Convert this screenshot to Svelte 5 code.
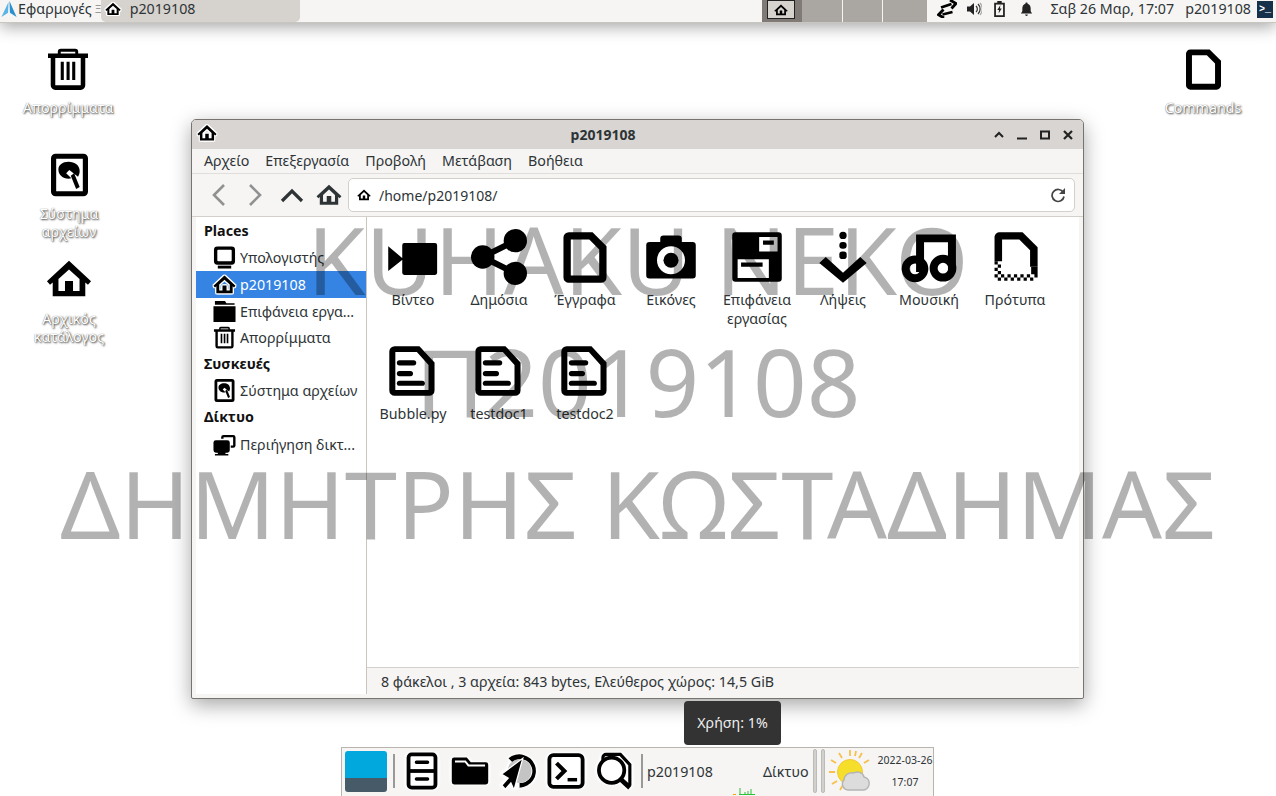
<script>
  const places = [
    { head: 'Places' },
    { icon: 'computer', label: 'Υπολογιστής' },
    { icon: 'home', label: 'p2019108', active: true },
    { icon: 'folder', label: 'Επιφάνεια εργα...' },
    { icon: 'trash', label: 'Απορρίμματα' },
    { head: 'Συσκευές' },
    { icon: 'disk', label: 'Σύστημα αρχείων' },
    { head: 'Δίκτυο' },
    { icon: 'network', label: 'Περιήγηση δικτ...' }
  ];
  const files = [
    { icon: 'video', label: 'Βίντεο' },
    { icon: 'share', label: 'Δημόσια' },
    { icon: 'doc', label: 'Έγγραφα' },
    { icon: 'camera', label: 'Εικόνες' },
    { icon: 'desktop', label: 'Επιφάνεια εργασίας' },
    { icon: 'download', label: 'Λήψεις' },
    { icon: 'music', label: 'Μουσική' },
    { icon: 'template', label: 'Πρότυπα' },
    { icon: 'text', label: 'Bubble.py' },
    { icon: 'text', label: 'testdoc1' },
    { icon: 'text', label: 'testdoc2' }
  ];
  const menus = ['Αρχείο', 'Επεξεργασία', 'Προβολή', 'Μετάβαση', 'Βοήθεια'];
</script>

<svg class="defs" aria-hidden="true">
  <symbol id="home" viewBox="0 0 24 24">
    <path fill-rule="evenodd" d="M12 2.500 23.500 13.200l-1.600 1.800-1.400-1.200V21H3.500v-7.200L2.100 15 .5 13.200zM12 7l-5.500 5v6.200h3.400V13h4.200v5.200h3.400V12z"/>
  </symbol>
  <symbol id="trash" viewBox="1 0 22 24">
    <path fill-rule="evenodd" d="M8 .8h8a1.600 1.600 0 0 1 1.600 1.600V3.500H23v2.400h-1.500V21a2.500 2.500 0 0 1-2.500 2.500H5A2.500 2.500 0 0 1 2.500 21V5.900H1V3.500h5.400V2.400A1.600 1.600 0 0 1 8 .8zm0 1.700v1h8v-1zM5 5.900V21h14V5.900z"/>
    <path d="M8 8h1.700v10H8zM11.200 8h1.700v10h-1.700zM14.300 8H16v10h-1.700z"/>
  </symbol>
  <symbol id="file" viewBox="2 .5 20 23">
    <path fill-rule="evenodd" d="M4.500 .5h11L22 7v14a2.500 2.500 0 0 1-2.500 2.500h-15A2.500 2.500 0 0 1 2 21V3A2.500 2.500 0 0 1 4.500.5zM5.400 3.800v16.400h13.200V8.500l-4.700-4.700z"/>
  </symbol>
  <symbol id="disk" viewBox="2 .5 20 23">
    <path fill-rule="evenodd" d="M4.500 .5h15A2.500 2.500 0 0 1 22 3v18a2.500 2.500 0 0 1-2.500 2.500h-15A2.500 2.500 0 0 1 2 21V3A2.500 2.500 0 0 1 4.500.5zM4.800 3.200v17.600h14.400V3.200z"/>
    <path d="M11.500 4.800c3.400 0 6 1.900 6 5.100 0 1.100-.3 2.100-.9 3l-4.700-3.600-1.700 1.700 2.800 2.800c-.5.100-1 .2-1.500.2-3.200 0-5.500-2.200-5.500-5 0-2.500 2.300-4.200 5.500-4.200zM12.700 12.400l1.800-1.400 3 7.500-1.900 1z"/>
  </symbol>
  <symbol id="computer" viewBox="0 0 24 24">
    <path fill-rule="evenodd" d="M4.500 .5h15A3.500 3.500 0 0 1 23 4v12a3.500 3.500 0 0 1-3.500 3.500h-15A3.500 3.500 0 0 1 1 16V4A3.500 3.500 0 0 1 4.500.5zM5.500 3.800a1 1 0 0 0-1 1v10a1 1 0 0 0 1 1h13a1 1 0 0 0 1-1v-10a1 1 0 0 0-1-1z"/>
    <path d="M5 20.500h14v3H5z"/>
  </symbol>
  <symbol id="folder" viewBox="0 0 24 24">
    <path d="M2 1h10.500L14 3.500h8.500V5H2zM.5 6.500h23V23H.5z"/>
  </symbol>
  <symbol id="network" viewBox="0 0 24 24">
    <path fill-rule="evenodd" d="M11 2h10a2.500 2.500 0 0 1 2.500 2.500V13a2.500 2.500 0 0 1-2.500 2.500h-2.500V13H21V4.500H11V6H8.500V4.500A2.500 2.500 0 0 1 11 2z"/>
    <path d="M3 7.500h12A2.500 2.500 0 0 1 17.500 10v8a2.500 2.500 0 0 1-2.500 2.500h-2V22h3v1.500H2V22h3v-1.500H3A2.500 2.500 0 0 1 .5 18v-8A2.500 2.500 0 0 1 3 7.500z"/>
  </symbol>
  <symbol id="video" viewBox="-1 -1 26 26">
    <path d="M8 5.500h14.200a1 1 0 0 1 1 1v12.800a1 1 0 0 1-1 1H8a1 1 0 0 1-1-1V6.500a1 1 0 0 1 1-1zM.5 7 7.500 12.900.5 18.500z"/>
  </symbol>
  <symbol id="share" viewBox="0 0 24 24">
    <circle cx="19" cy="5" r="5"/><circle cx="19" cy="19" r="5"/><circle cx="5" cy="12" r="5"/>
    <path d="M5 12 19 5M5 12l14 7" stroke="#000" stroke-width="2.600" fill="none"/>
  </symbol>
  <symbol id="doc" viewBox="-1 -1 26 26">
    <path fill-rule="evenodd" d="M4.500 .5h11L22 7v14.500a2.500 2.500 0 0 1-2.500 2.500h-15A2.500 2.500 0 0 1 2 21.500V3A2.500 2.500 0 0 1 4.500.5zM5.400 3.900v16.700h13.200V8.500l-4.600-4.600z"/>
  </symbol>
  <symbol id="camera" viewBox="-1 -1 26 26">
    <path fill-rule="evenodd" d="M8.500 2h7a1.500 1.500 0 0 1 1.500 1.500V5h5a1.500 1.500 0 0 1 1.500 1.500v14a1.500 1.500 0 0 1-1.500 1.500H2a1.500 1.500 0 0 1-1.500-1.500v-14A1.500 1.500 0 0 1 2 5h5V3.500A1.500 1.500 0 0 1 8.500 2zM12 7a6.500 6.500 0 1 0 0 13 6.500 6.500 0 0 0 0-13z"/>
    <circle cx="12" cy="13.500" r="3.500"/>
  </symbol>
  <symbol id="desktop" viewBox="-1 -1 26 26">
    <path fill-rule="evenodd" d="M2 .5h20A1.500 1.500 0 0 1 23.500 2v20a1.500 1.500 0 0 1-1.500 1.500H2A1.500 1.500 0 0 1 .5 22V2A1.500 1.500 0 0 1 2 .5zM13 2.700v6.800h8.500V2.700zm1.800 1.600h5v2h-5zM3 13v8.700h14.500V13zm1.600 1.500h10v2h-10z"/>
  </symbol>
  <symbol id="download" viewBox="-1 -1 26 26">
    <circle cx="12" cy="2" r="1.700"/><rect x="10.300" y="5" width="3.400" height="3.200" rx="1.500"/><rect x="10.300" y="9.500" width="3.400" height="3.400" rx="1.300"/>
    <path d="M1 14.800 4 12l8 7.300L20 12l3 2.800L12 24z"/>
  </symbol>
  <symbol id="music" viewBox="-1 -1 26 26">
    <path d="M6 1.500h18.500v17h-3.700V5.200H9.700V19H6z"/>
    <path fill-rule="evenodd" d="M5.500 11.300a6.200 6.200 0 1 1 0 12.400 6.200 6.200 0 0 1 0-12.400zm0 3.700a2.500 2.500 0 1 0 0 5 2.500 2.500 0 0 0 0-5zM18.500 11a6.200 6.200 0 1 1 0 12.400 6.200 6.200 0 0 1 0-12.400zm0 3.700a2.500 2.500 0 1 0 0 5 2.500 2.500 0 0 0 0-5z"/>
  </symbol>
  <symbol id="template" viewBox="-1 -1 26 26">
    <path d="M4.500.5h11L22.500 7.500V16.500H19V8.900L14 3.900H6V14H2.500V2.500A2.500 2.500 0 0 1 4.500.5z"/>
    <path d="M2.500 14h1.500v1.500H2.500zM4 15.500h1.500V17H4zM2.500 17H4v1.500H2.500zM4 18.500h1.500V20H4zM2.500 20H4v1.500H2.500zM5.500 20H7v1.500H5.500zM4 21.500h1.500V23H4zM7 21.500h1.500V23H7zM10 21.500h1.500V23H10zM8.500 20H10v1.500H8.500zM11.500 20H13v1.500h-1.500zM13 21.500h1.500V23H13zM14.500 20H16v1.500h-1.500zM16 21.500h1.500V23H16zM17.500 20H19v1.500h-1.500zM19 21.500h1.500V23H19zM19.500 16.500h3V20h-3zM21 20h1.500v1.500H21z"/>
  </symbol>
  <symbol id="text" viewBox="-1 -1 26 26">
    <path fill-rule="evenodd" d="M3.500.5h11.500l7 7.500v13a2.500 2.500 0 0 1-2.500 2.500h-16A2.500 2.500 0 0 1 1 21V3A2.500 2.500 0 0 1 3.500.5zM3.800 3.200v17.600h15.400V9.200l-5.400-6z"/>
    <rect x="4.500" y="7" width="9" height="2.400" rx="1.200"/><rect x="4.500" y="12" width="7.500" height="2.400" rx="1.200"/><rect x="4.500" y="16.500" width="13" height="2.400" rx="1.200"/>
  </symbol>
</svg>

<div class="desktop">
  <header class="panel">
    <div class="panel-left">
      <svg class="logo" viewBox="0 0 16 18"><path d="M8.500 0 16 17 9 12.500z" fill="#2a8fd0"/><path d="M7.500 1 0 17l7-4.500z" fill="#5ab4e6"/></svg>
      <span class="apps">Εφαρμογές</span>
      <span class="handle">Ξ</span>
      <div class="task">
        <svg class="i14 halo"><use href="#home" /></svg>
        <span>p2019108</span>
      </div>
    </div>
    <div class="panel-right">
      <div class="pager">
        <div class="page current"><span class="page-win"><svg class="i12"><use href="#home" /></svg></span></div>
        <div class="page p2"></div>
        <div class="page"></div>
        <div class="page last"></div>
      </div>
      <div class="tray">
        <svg class="arrows" viewBox="0 0 20 18"><path d="M4 7.500 14.500 4M15.500 12 5.500 14.500" fill="none" stroke="#000" stroke-width="2.800"/><path d="M13 0 19 3.500 14.500 8.500M6.500 9.500 1.500 14.800 7 18" fill="none" stroke="#000" stroke-width="2.800"/></svg>
        <svg class="vol" viewBox="0 0 16 16"><path d="M1 5.500h3L8 2v12L4 10.500H1z" fill="#222"/><path d="M10 5a4 4 0 0 1 0 6M12 3a7 7 0 0 1 0 10" fill="none" stroke="#333" stroke-width="1.200"/><path d="M14 2a9 9 0 0 1 0 12" fill="none" stroke="#aaa" stroke-width="1.200"/></svg>
        <svg class="batt" viewBox="0 0 14 18"><path d="M4.500 0h5v2H13v16H1V2h3.500z" fill="#222"/><rect x="3" y="4" width="8" height="12" fill="#f6f5f4"/><path d="M8 4.500 4.500 10h2L6 14l3.500-5.500h-2z" fill="#222"/></svg>
        <svg class="bell" viewBox="0 0 14 16"><path d="M7 .5c.8 0 1.200.5 1.200 1.200C10.500 2.400 11.500 4.300 11.500 7v3l1.500 2.200H1L2.500 10V7c0-2.700 1-4.600 3.300-5.300C5.800 1 6.200.5 7 .5zM5.500 13.500h3a1.500 1.500 0 0 1-3 0z" fill="#222"/></svg>
      </div>
      <span class="clock">Σαβ 26 Μαρ, 17:07</span>
      <span class="user">p2019108</span>
      <span class="term-mini">&gt;_</span>
    </div>
  </header>

  <div class="dicon d-trash"><svg><use href="#trash" /></svg><span>Απορρίμματα</span></div>
  <div class="dicon d-disk"><svg><use href="#disk" /></svg><span>Σύστημα<br />αρχείων</span></div>
  <div class="dicon d-home"><svg><use href="#home" /></svg><span>Αρχικός<br />κατάλογος</span></div>
  <div class="dicon d-cmd"><svg><use href="#file" /></svg><span>Commands</span></div>

  <section class="window">
    <div class="titlebar">
      <svg class="i20 ticon halo"><use href="#home" /></svg>
      <span class="title">p2019108</span>
      <div class="wbtns">
        <svg viewBox="0 0 10 10"><path d="M1 7l4-4 4 4" fill="none" stroke="#222" stroke-width="2"/></svg>
        <svg viewBox="0 0 10 10"><path d="M0 8.500h10" stroke="#222" stroke-width="2"/></svg>
        <svg viewBox="0 0 10 10"><rect x="1" y="1.500" width="8" height="7" fill="none" stroke="#222" stroke-width="2"/></svg>
        <svg viewBox="0 0 10 10"><path d="M1 1l8 8M9 1l-8 8" stroke="#222" stroke-width="2.200"/></svg>
      </div>
    </div>
    <nav class="menubar">
      {#each menus as m}<span>{m}</span>{/each}
    </nav>
    <div class="toolbar">
      <svg class="nav" viewBox="0 0 24 24"><path d="M16 2 6 12l10 10" fill="none" stroke="#919191" stroke-width="2.600"/></svg>
      <svg class="nav fwd" viewBox="0 0 24 24"><path d="M8 2l10 10L8 22" fill="none" stroke="#919191" stroke-width="2.600"/></svg>
      <svg class="nav" viewBox="0 0 24 24"><path d="M2 18 12 8l10 10" fill="none" stroke="#2e3436" stroke-width="3.200"/></svg>
      <svg class="navhome"><use href="#home" /></svg>
      <div class="location">
        <svg class="i12"><use href="#home" /></svg>
        <span class="path">/home/p2019108/</span>
        <svg class="reload" viewBox="0 0 16 16"><path d="M13.300 5.500A6 6 0 1 0 14 9.500" fill="none" stroke="#444" stroke-width="1.700"/><path d="M15 1v6H9z" fill="#444"/></svg>
      </div>
    </div>
    <div class="body">
      <aside class="sidebar">
        {#each places as p}
          {#if p.head}
            <div class="shead">{p.head}</div>
          {:else}
            <div class="sitem" class:active={p.active}>
              <svg class:halo={p.active}><use href={'#' + p.icon} /></svg>
              <span>{p.label}</span>
            </div>
          {/if}
        {/each}
      </aside>
      <div class="content">
        <main class="files">
          {#each files as f}
            <div class="file">
              <svg><use href={'#' + f.icon} /></svg>
              <span>{f.label}</span>
            </div>
          {/each}
        </main>
        <footer class="status">8 φάκελοι , 3 αρχεία: 843 bytes, Ελεύθερος χώρος: 14,5 GiB</footer>
      </div>
    </div>
  </section>

  <div class="watermark">
    <div>KUHAKU NEKO</div>
    <div>Π2019108</div>
    <div>ΔΗΜΗΤΡΗΣ ΚΩΣΤΑΔΗΜΑΣ</div>
  </div>

  <div class="tooltip">Χρήση: 1%</div>

  <footer class="dock">
    <div class="showapps"></div>
    <div class="sep"></div>
    <div class="launchers">
      <svg viewBox="0 0 24 24"><rect x="3.500" y="1.500" width="17" height="21" rx="2" fill="#fff" stroke="#000" stroke-width="2.400"/><path d="M3.500 12h17" stroke="#000" stroke-width="2.400"/><path d="M8.500 6.500h7M8.500 17h7" stroke="#000" stroke-width="2.200" stroke-linecap="round"/></svg>
      <svg viewBox="0 0 24 24"><path d="M.5 5a1.500 1.500 0 0 1 1.500-1.500h8l2.500 3H22a1.500 1.500 0 0 1 1.500 1.500v11A1.500 1.500 0 0 1 22 20.500H2A1.500 1.500 0 0 1 .5 19z"/><path d="M2.500 6h6.500l2 2.500h10.500" stroke="#fff" stroke-width="1.200" fill="none"/></svg>
      <svg viewBox="0 0 24 24"><path d="M6 4a10.500 10.500 0 1 1 7 18.500v-3a7.500 7.500 0 1 0-4.500-13z"/><circle cx="13" cy="12" r="7.500" fill="#c4c4c4"/><path d="M15 4 9.500 24l-2-4.500-3.500 4L1.800 21l4-4.500L1.500 14z" stroke="#fff" stroke-width=".8"/></svg>
      <svg viewBox="0 0 24 24"><rect x="1.500" y="2" width="21" height="20" rx="2.500" fill="#fff" stroke="#000" stroke-width="2.400"/><path d="M6 7l5 5-5 5" fill="none" stroke="#000" stroke-width="2.600"/><path d="M13 17.500h6" stroke="#000" stroke-width="2.200"/></svg>
      <svg viewBox="0 0 24 24"><path d="M5 9V3.500A2 2 0 0 1 7 1.500h9l6 6.500v13" fill="#fff" stroke="#000" stroke-width="2"/><circle cx="10.500" cy="11.500" r="8" fill="#fff" stroke="#000" stroke-width="2.400"/><path d="M16 17l6 5.500" stroke="#000" stroke-width="3"/></svg>
    </div>
    <div class="sep sep2"></div>
    <span class="dock-user">p2019108</span>
    <span class="dock-net">Δίκτυο<svg class="spark" viewBox="0 0 22 8"><path d="M0 7.500h3" stroke="#f4a400"/><path d="M6 7.500h16M7 7.500V1M12 7.500V5M15 7.500V4M18 7.500V2" stroke="#2fbf3a" fill="none"/></svg></span>
    <div class="grips"><i></i><i></i></div>
    <svg class="weather" viewBox="0 0 42 42">
      <g stroke="#f7c04a" stroke-width="1.800"><path d="M21 0v6M10 3l3 5M2 10l5 3M0 22h6M3 34l5-3M11 40l3-5M33 3l-3 5M40 10l-5 3M27 1l-1 5"/></g>
      <circle cx="21" cy="22" r="12.500" fill="#f6df2a" stroke="#f3c733" stroke-width="1"/>
      <path d="M19 40a6 6 0 0 1-4-10c0-5 5-8 10-7 3-2 9-1 10 4 4 1 6 4 5 8-1 3-3 5-6 5z" fill="#dcdcdc" stroke="#b4b4b4" stroke-width="1.400"/>
    </svg>
    <div class="dock-clock"><span>2022-03-26</span><span>17:07</span></div>
  </footer>
</div>

<style>
  :global(body) {
    margin: 0;
    background: #fff;
    overflow: hidden;
  }
  .defs {
    position: absolute;
    width: 0;
    height: 0;
  }
  .desktop {
    position: relative;
    width: 1276px;
    height: 796px;
    overflow: hidden;
    background: #fff;
    font-family: "Noto Sans", sans-serif;
    font-size: 14.25px;
    color: #2e3436;
  }
  svg { display: block; flex: none; }
  .panel {
    position: relative;
    z-index: 3;
    height: 22px;
    display: flex;
    justify-content: space-between;
    background: #f6f5f4;
    border-bottom: 1px solid #c9c5bf;
    box-shadow: 0 4px 16px rgba(0, 0, 0, 0.35);
  }
  .panel-left, .panel-right { display: flex; align-items: flex-start; height: 22px; line-height: 18px; }
  .logo { width: 16px; height: 17px; margin: 1px 0 0 1px; }
  .apps { margin-left: 1px; }
  .handle { margin-left: 3px; font-size: 11px; color: #999; width: 6px; }
  .task {
    display: flex;
    align-items: flex-start;
    width: 199px;
    height: 22px;
    box-sizing: border-box;
    padding: 0 0 0 4px;
    background: #d6d2ce;
    border-radius: 0 0 5px 5px;
    gap: 9px;
  }
  .i14 { width: 16px; height: 16px; margin-top: 1px; }
  .i12 { width: 14px; height: 14px; }
  .i20 { width: 20px; height: 20px; }
  .pager { display: flex; height: 22px; margin-right: 10px; width: 165px; }
  .page { width: 40px; background: #aaa7a3; border-right: 1px solid #f6f5f4; box-sizing: border-box; }
  .page.p2 { width: 41px; }
  .page.last { border-right: 0; width: 44px; }
  .page.current {
    background: #7f7a75;
    display: flex;
    justify-content: center;
    border-right: 0;
    width: 40px;
  }
  .page-win {
    width: 28px;
    height: 19px;
    border: 1px solid #222;
    background: #d6d2ce;
    display: flex;
    align-items: center;
    justify-content: center;
    box-sizing: border-box;
    margin-right: 3px;
  }
  .tray { display: flex; align-items: center; height: 18px; }
  .arrows { width: 20px; height: 18px; margin-right: 9px; }
  .vol { width: 16px; height: 16px; margin-right: 11px; }
  .batt { width: 13px; height: 16px; margin-right: 14px; }
  .bell { width: 13px; height: 15px; margin-right: 17px; }
  .user { margin-left: 11px; }
  .term-mini {
    width: 16px;
    height: 17px;
    margin: 1px 3px 0 6px;
    background: #16324a;
    color: #fff;
    font: bold 10px/17px "Liberation Mono", monospace;
    text-align: center;
  }
  .dicon {
    position: absolute;
    width: 110px;
    display: flex;
    flex-direction: column;
    align-items: center;
    color: #fff;
    text-align: center;
    line-height: 18px;
    text-shadow: 1px 1px 2px rgba(0, 0, 0, 0.75), 0 0 1px rgba(0, 0, 0, 0.5);
  }
  .dicon svg { height: 44px; margin-bottom: 8px; }
  .d-trash { left: 13px; top: 47px; }
  .d-trash svg { width: 40px; }
  .d-disk { left: 14px; top: 153px; }
  .d-disk svg { width: 37px; }
  .d-home { left: 14px; top: 256px; }
  .d-home svg { width: 46px; height: 46px; margin-bottom: 8px; }
  .d-cmd { left: 1148px; top: 49px; }
  .d-cmd svg { width: 35px; height: 41px; margin-bottom: 9px; }
  .window {
    position: absolute;
    left: 191px;
    top: 119px;
    width: 893px;
    height: 580px;
    box-sizing: border-box;
    display: flex;
    flex-direction: column;
    background: #f6f5f4;
    border: 1px solid #77736e;
    border-radius: 5px 5px 2px 2px;
    box-shadow: 0 6px 20px rgba(0, 0, 0, 0.35);
  }
  .titlebar {
    height: 29px;
    flex: none;
    display: flex;
    align-items: center;
    position: relative;
    background: #d8d5d2;
    border-radius: 4px 4px 0 0;
    padding-left: 5px;
  }
  .ticon { margin-top: -3px; }
  .title {
    position: absolute;
    left: 0;
    width: 822px;
    text-align: center;
    font-weight: 700;
    font-size: 14px;
    color: #2e3436;
  }
  .wbtns { position: absolute; right: 10px; top: 10px; display: flex; gap: 13px; }
  .wbtns svg { width: 10px; height: 10px; }
  .menubar {
    height: 25px;
    flex: none;
    display: flex;
    align-items: center;
    gap: 16px;
    padding: 0 0 2px 12px;
    border-bottom: 1px solid #e0dedb;
    box-sizing: border-box;
  }
  .toolbar {
    height: 43px;
    flex: none;
    box-sizing: border-box;
    display: flex;
    align-items: center;
    padding: 0 8px 0 16px;
    border-bottom: 1px solid #d3cfca;
  }
  .nav { width: 24px; height: 24px; margin-right: 12px; }
  .fwd { margin-left: -2px; margin-right: 14px; }
  .navhome { width: 26px; height: 26px; fill: #2e3436; }
  .location {
    flex: 1;
    height: 34px;
    margin-left: 6px;
    box-sizing: border-box;
    display: flex;
    align-items: center;
    background: #fff;
    border: 1px solid #d3cfca;
    border-radius: 5px;
    padding: 0 8px;
    gap: 8px;
  }
  .path { flex: 1; font-size: 14px; }
  .reload { width: 16px; height: 16px; }
  .body { flex: 1; display: flex; min-height: 0; margin: 0 4px 4px; background: #fff; }
  .sidebar {
    width: 171px;
    flex: none;
    box-sizing: border-box;
    padding-top: 1px;
    background: #fff;
    border-right: 1px solid #c9c5bf;
  }
  .shead { height: 26.6px; line-height: 26.6px; padding-left: 8px; font-weight: 700; color: #111; }
  .sitem {
    height: 26.6px;
    display: flex;
    align-items: center;
    gap: 4px;
    padding-left: 17px;
    color: #2e3436;
    white-space: nowrap;
  }
  .sitem svg { width: 23px; height: 23px; }
  .sitem.active { background: #3584e4; color: #fff; }
  .halo { filter: drop-shadow(1px 0 0 #fff) drop-shadow(-1px 0 0 #fff) drop-shadow(0 1px 0 #fff) drop-shadow(0 -1px 0 #fff); }
  .content { flex: 1; min-width: 0; display: flex; flex-direction: column; }
  .files {
    flex: 1;
    display: grid;
    grid-template-columns: repeat(auto-fill, 86px);
    grid-auto-rows: 114px;
    padding: 12px 0 0 3px;
    align-content: start;
  }
  .file { display: flex; flex-direction: column; align-items: center; text-align: center; line-height: 19px; }
  .file svg { width: 56px; height: 56px; }
  .file span { margin-top: 5px; width: 84px; }
  .status {
    height: 27px;
    flex: none;
    box-sizing: border-box;
    display: flex;
    align-items: center;
    padding-left: 14px;
    background: #f6f5f4;
    border-top: 1px solid #d3cfca;
  }
  .watermark {
    position: absolute;
    left: 0;
    right: 0;
    top: 198px;
    z-index: 4;
    pointer-events: none;
    display: flex;
    flex-direction: column;
    align-items: center;
    font-size: 94px;
    line-height: 122px;
    color: rgba(0, 0, 0, 0.3);
    white-space: nowrap;
  }
  .tooltip {
    position: absolute;
    left: 684px;
    top: 701px;
    width: 97px;
    height: 44px;
    z-index: 5;
    line-height: 44px;
    text-align: center;
    background: #333;
    color: #eee;
    border-radius: 4px;
  }
  .dock {
    position: absolute;
    left: 341px;
    top: 747px;
    width: 593px;
    height: 49px;
    box-sizing: border-box;
    display: flex;
    align-items: center;
    background: #f6f5f4;
    border: 1px solid #b9b4ad;
    border-bottom: 0;
    padding: 0 0 2px 3px;
  }
  .showapps {
    width: 42px;
    height: 41px;
    border-radius: 3px;
    background: linear-gradient(#00a8de 0 65%, #465a68 65%);
  }
  .sep { width: 2px; height: 34px; background: #999; margin-left: 6px; }
  .launchers { display: flex; margin-left: 3px; }
  .launchers svg {
    width: 38px;
    height: 38px;
    margin: 0 5px;
    filter: drop-shadow(2px 0 1px #fff) drop-shadow(-2px 0 1px #fff);
  }
  .sep2 { margin-left: 3px; }
  .dock-user { margin-left: 4px; width: 116px; }
  .dock-net { position: relative; width: 45px; }
  .spark { position: absolute; left: -30px; top: 25px; width: 22px; height: 8px; }
  .grips { display: flex; gap: 4px; margin-left: 5px; }
  .grips i { display: block; width: 4px; height: 44px; background: #d3cfca; border: 1px solid #bbb; box-sizing: border-box; border-radius: 2px; }
  .weather { width: 42px; height: 42px; margin-left: 4px; }
  .dock-clock {
    display: flex;
    flex-direction: column;
    align-items: center;
    width: 56px;
    margin-left: 6px;
    font-size: 10.5px;
    line-height: 22px;
  }
</style>
